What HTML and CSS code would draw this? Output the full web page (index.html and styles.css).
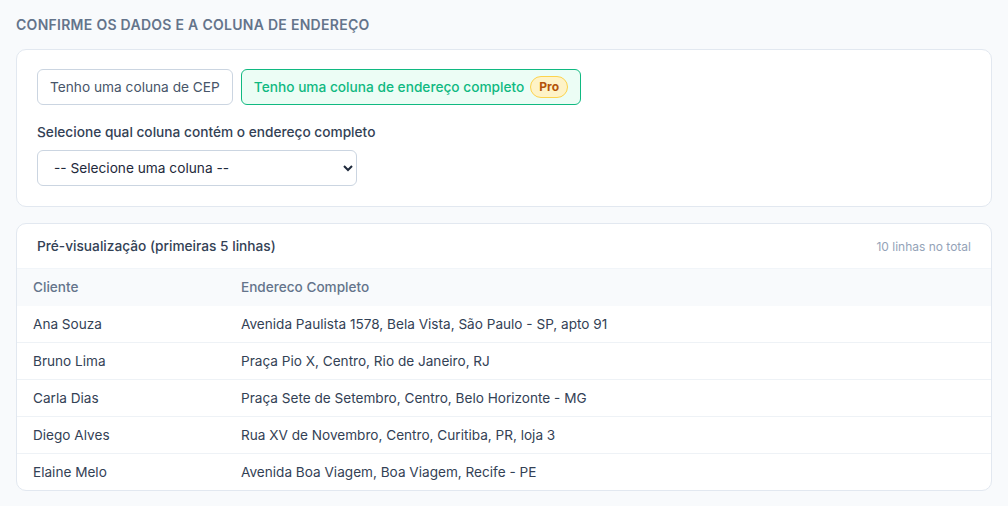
FILE: index.html
```html
<!DOCTYPE html>
<html lang="pt-BR">
<head>
  <meta charset="UTF-8" />
  <meta name="viewport" content="width=device-width, initial-scale=1.0"/>
  <title>Confirmar dados</title>
  <link rel="stylesheet" href="styles.css">
</head>
<body>

  <h2 class="section-title">Confirme os dados e a coluna de endereço</h2>

  <div class="card options">
    <div class="mode-row">
      <button class="mode-btn">Tenho uma coluna de CEP</button>
      <button class="mode-btn active">Tenho uma coluna de endereço completo <span class="badge">Pro</span></button>
    </div>
    <label class="field-label" for="colSelect">Selecione qual coluna contém o endereço completo</label>
    <select id="colSelect" class="col-select">
      <option>-- Selecione uma coluna --</option>
      <option>Cliente</option>
      <option>Endereco Completo</option>
    </select>
  </div>

  <div class="card preview">
    <div class="preview-head">
      <span class="preview-title">Pré-visualização (primeiras 5 linhas)</span>
      <span class="preview-count">10 linhas no total</span>
    </div>
    <table class="preview-table">
      <thead>
        <tr><th class="col-name">Cliente</th><th>Endereco Completo</th></tr>
      </thead>
      <tbody>
        <tr><td>Ana Souza</td><td>Avenida Paulista 1578, Bela Vista, São Paulo - SP, apto 91</td></tr>
        <tr><td>Bruno Lima</td><td>Praça Pio X, Centro, Rio de Janeiro, RJ</td></tr>
        <tr><td>Carla Dias</td><td>Praça Sete de Setembro, Centro, Belo Horizonte - MG</td></tr>
        <tr><td>Diego Alves</td><td>Rua XV de Novembro, Centro, Curitiba, PR, loja 3</td></tr>
        <tr><td>Elaine Melo</td><td>Avenida Boa Viagem, Boa Viagem, Recife - PE</td></tr>
      </tbody>
    </table>
  </div>

</body>
</html>
```

FILE: styles.css
```css
body {
  margin: 0;
  padding: 16px;
  font-family: Inter, 'Noto Sans', sans-serif;
  background-color: #f8fafc;
  color: #334155;
}

.section-title {
  margin: 0 0 15px;
  font-size: 14px;
  line-height: 18px;
  font-weight: 600;
  text-transform: uppercase;
  letter-spacing: 0.02em;
  color: #64748b;
}

.card {
  background-color: #ffffff;
  border: 1px solid #e2e8f0;
  border-radius: 10px;
}

.options {
  padding: 19px 20px 20px;
  margin-bottom: 16px;
}

.mode-row {
  display: flex;
  gap: 8px;
  margin-bottom: 17px;
}

.mode-btn {
  display: flex;
  align-items: center;
  gap: 6px;
  height: 36px;
  padding: 0 12px;
  font-family: inherit;
  font-size: 13.7px;
  color: #475569;
  background-color: #ffffff;
  border: 1px solid #cbd5e1;
  border-radius: 6px;
  cursor: pointer;
}

.mode-btn.active {
  color: #10b981;
  font-weight: 500;
  background-color: #ecfdf5;
  border-color: #10b981;
}

.badge {
  display: inline-block;
  padding: 2px 8px;
  font-size: 12px;
  font-weight: 700;
  line-height: 16px;
  color: #b45309;
  background-color: #fef3c7;
  border: 1px solid #fcd34d;
  border-radius: 999px;
}

.field-label {
  display: block;
  font-size: 13.7px;
  font-weight: 500;
  line-height: 20px;
  color: #334155;
  margin-bottom: 8px;
}

.col-select {
  width: 320px;
  height: 36px;
  padding: 0 12px;
  font-family: inherit;
  font-size: 13.7px;
  color: #1e293b;
  background-color: #ffffff;
  border: 1px solid #cbd5e1;
  border-radius: 6px;
}

.preview {
  overflow: hidden;
}

.preview-head {
  display: flex;
  justify-content: space-between;
  align-items: center;
  height: 44px;
  padding: 0 20px;
  border-bottom: 1px solid #f1f5f9;
}

.preview-title {
  font-size: 13.7px;
  font-weight: 500;
  color: #334155;
}

.preview-count {
  font-size: 12px;
  color: #94a3b8;
}

.preview-table {
  width: 100%;
  border-collapse: collapse;
  font-size: 13.6px;
}

.preview-table th {
  text-align: left;
  font-weight: 500;
  color: #64748b;
  background-color: #f8fafc;
  height: 36px;
  padding: 0 16px 1px;
}

.preview-table th.col-name {
  width: 176px;
}

.preview-table td {
  height: 35px;
  padding: 0 16px 1px;
  color: #334155;
  border-top: 1px solid #eef2f6;
}

.preview-table tbody tr:first-child td {
  border-top: none;
}
```
